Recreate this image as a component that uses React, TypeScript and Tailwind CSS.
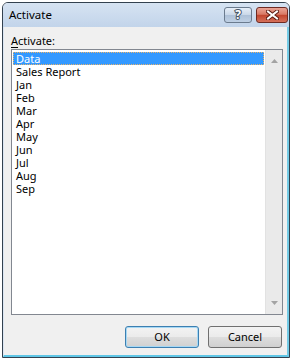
import React from 'react';

const items = ['Data', 'Sales Report', 'Jan', 'Feb', 'Mar', 'Apr', 'May', 'Jun', 'Jul', 'Aug', 'Sep'];

const btn =
  'w-[74px] h-[22px] rounded-[3px] border text-[11px] text-black flex items-center justify-center bg-[linear-gradient(to_bottom,#f3f3f3_0%,#ebebeb_48%,#dddddd_52%,#d0d0d0_100%)]';

export default function App() {
  return (
    <div className="w-[294px] h-[360px] bg-white pl-[2px] pt-[2px] font-['Noto_Sans',sans-serif]">
      <div className="w-[288px] h-[356px] flex flex-col border border-[#33414f] rounded-t-[6px] overflow-hidden">
        {/* title bar */}
        <div className="h-[24px] shrink-0 flex items-start bg-[linear-gradient(to_bottom,#d6e3f2,#c2d4ea)]">
          <span className="ml-[6px] mt-[4px] text-[11.5px] leading-[15px] text-black">Activate</span>
          <div className="ml-auto mt-[4px] mr-[1px] flex gap-[4px]">
            <div className="w-[28px] h-[16px] rounded-[3px] border border-[#6b7b8e] bg-[linear-gradient(to_bottom,#e6eef8_0%,#c9d7e8_50%,#aec1d8_52%,#bfd0e4_100%)] flex items-center justify-center">
              <span className="text-[12px] leading-none font-bold text-white [-webkit-text-stroke:2px_#4a5868] [paint-order:stroke_fill]">?</span>
            </div>
            <div className="w-[32px] h-[16px] rounded-[3px] border border-[#6e2a22] bg-[linear-gradient(to_bottom,#eaa495_0%,#d97a66_45%,#c2462f_52%,#d5705a_100%)] flex items-center justify-center">
              <svg width="13" height="10" viewBox="0 0 13 10">
                <path d="M2 1.5 L11 8.5 M11 1.5 L2 8.5" stroke="#5a1a12" strokeWidth="4" strokeLinecap="square" />
                <path d="M2 1.5 L11 8.5 M11 1.5 L2 8.5" stroke="#ffffff" strokeWidth="2" strokeLinecap="square" />
              </svg>
            </div>
          </div>
        </div>

        {/* body */}
        <div className="flex-1 flex flex-col bg-[#f0f0f0] border-l border-l-[#dce6f3] border-r-2 border-r-[#74cbe6] border-b-2 border-b-[#5fc6e6] pl-[7px] pr-[4px] pt-[6px] pb-[7px]">
          <div className="h-[16px] text-[11px] leading-[15px] text-black">
            <span className="underline underline-offset-[2px]">A</span>ctivate:
          </div>
          <div className="h-[266px] flex border border-[#828790] bg-white">
            <div className="flex-1 flex flex-col px-[1px] pt-[2px]">
              {items.map((it, i) => (
                <div
                  key={it}
                  className={
                    i === 0
                      ? 'h-[13px] pl-[2px] text-[11px] leading-[12px] text-white bg-[#3399ff] border border-dotted border-[#e9b46a]'
                      : 'h-[13px] pl-[3px] text-[11px] leading-[13px] text-black'
                  }
                >
                  {it}
                </div>
              ))}
            </div>
            <div className="w-[17px] flex flex-col justify-between items-center bg-[#eaeaea] border-l border-l-[#e2e2e2] py-[9px]">
              <svg width="7" height="4" viewBox="0 0 7 4">
                <path d="M3.5 0 L7 4 L0 4 Z" fill="#a3a3a3" />
              </svg>
              <svg width="7" height="4" viewBox="0 0 7 4">
                <path d="M0 0 L7 0 L3.5 4 Z" fill="#a3a3a3" />
              </svg>
            </div>
          </div>
          <div className="mt-[11px] flex justify-end gap-[9px] pr-[1px]">
            <button className={`${btn} border-[#3c7fb1] shadow-[inset_0_0_0_1px_#a6d8f4]`}>OK</button>
            <button className={`${btn} border-[#707070]`}>Cancel</button>
          </div>
        </div>
      </div>
    </div>
  );
}
